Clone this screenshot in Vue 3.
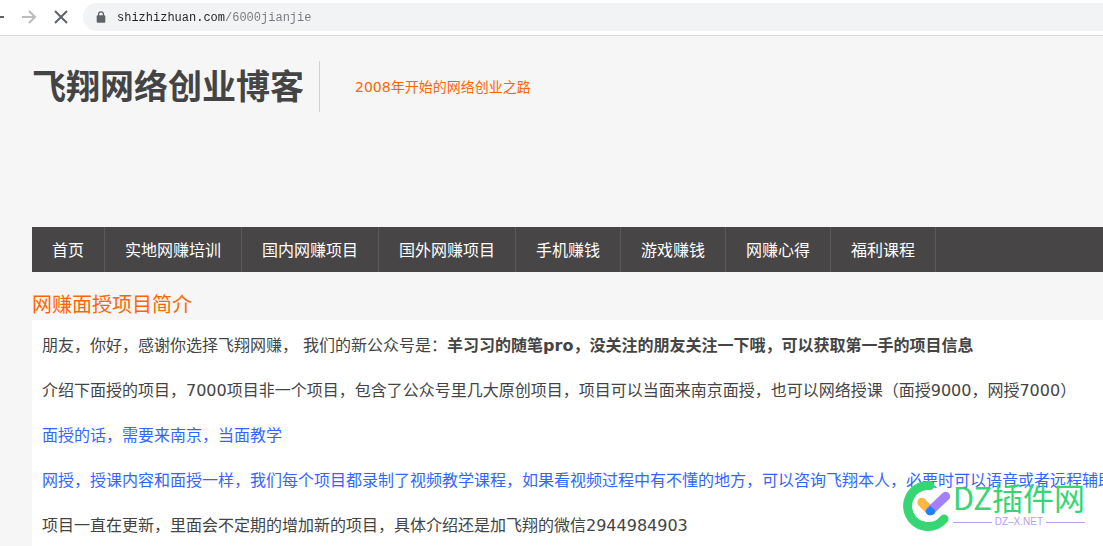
<script setup>
const navItems = ['首页', '实地网赚培训', '国内网赚项目', '国外网赚项目', '手机赚钱', '游戏赚钱', '网赚心得', '福利课程']
const url = 'shizhizhuan.com/6000jianjie'
</script>

<template>
  <div class="window">
    <div class="toolbar">
      <button class="tool back" type="button" aria-label="后退">
        <svg width="16" height="16" viewBox="0 0 16 16"><path d="M15 8H2M8 2L2 8l6 6" /></svg>
      </button>
      <button class="tool forward" type="button" aria-label="前进">
        <svg width="16" height="16" viewBox="0 0 16 16"><path d="M1 8h13M8 2l6 6-6 6" /></svg>
      </button>
      <button class="tool stop" type="button" aria-label="停止">
        <svg width="16" height="16" viewBox="0 0 16 16"><path d="M2 2l12 12M14 2L2 14" /></svg>
      </button>
      <label class="address">
        <svg class="lock" width="10" height="12" viewBox="0 0 10 12">
          <path d="M2.6 5V3.3a2.4 2.4 0 0 1 4.8 0V5" fill="none" stroke="#5f6368" stroke-width="1.3" />
          <rect x="0.7" y="4.2" width="8.6" height="7.6" rx="1" fill="#5f6368" />
        </svg>
        <input class="url" type="text" aria-label="地址" :value="url" spellcheck="false" />
      </label>
    </div>

    <div class="site">
      <header class="masthead">
        <h1 class="title">飞翔网络创业博客</h1>
        <p class="tagline">2008年开始的网络创业之路</p>
      </header>

      <nav class="nav">
        <a v-for="item in navItems" :key="item" href="#">{{ item }}</a>
      </nav>

      <main class="content">
        <h2 class="heading">网赚面授项目简介</h2>
        <article class="article">
          <p>朋友，你好，感谢你选择飞翔网赚， 我们的新公众号是：<strong>羊习习的随笔pro，没关注的朋友关注一下哦，可以获取第一手的项目信息</strong></p>
          <p>介绍下面授的项目，7000项目非一个项目，包含了公众号里几大原创项目，项目可以当面来南京面授，也可以网络授课（面授9000，网授7000）</p>
          <p class="blue">面授的话，需要来南京，当面教学</p>
          <p class="blue">网授，授课内容和面授一样，我们每个项目都录制了视频教学课程，如果看视频过程中有不懂的地方，可以咨询飞翔本人，必要时可以语音或者远程辅助</p>
          <p>项目一直在更新，里面会不定期的增加新的项目，具体介绍还是加飞翔的微信2944984903</p>
        </article>
      </main>
    </div>

    <div class="watermark">
      <svg width="52" height="56" viewBox="0 0 52 56" fill="none" stroke-linecap="round">
        <path d="M30 7.6A20.5 20.5 0 1 0 44 41" stroke="#35d673" stroke-width="9" />
        <path d="M21.7 24.3L30.3 32.7" stroke="#ffb83f" stroke-width="9" />
        <path d="M30.3 32.7L45.7 18.3" stroke="#a380ff" stroke-width="9" />
        <path d="M30.3 28L35 32.2C36 36 33 37.3 30.3 37.3S25 35.5 26 32.2Z" fill="#1684fc" />
      </svg>
      <div class="mark-text">
        <span class="mark-name">DZ插件网</span>
        <span class="mark-url">DZ–X.NET</span>
      </div>
    </div>
  </div>
</template>

<style>
body {
  margin: 0;
  background: #f6f6f6;
}
</style>

<style scoped>
.window {
  position: relative;
  display: flex;
  flex-direction: column;
  min-height: 100vh;
  overflow: hidden;
  background: #f6f6f6;
  color: #444;
  font-family: "DejaVu Sans", "Noto Sans CJK SC", sans-serif;
  font-size: 16px;
}

.toolbar {
  display: flex;
  flex: none;
  align-items: center;
  height: 35px;
  background: #fff;
  border-bottom: 1px solid #d9dadc;
}

.tool {
  display: flex;
  flex: none;
  padding: 0 0 1px;
  border: 0;
  background: none;
  color: #5f6368;
}

.tool path {
  fill: none;
  stroke: currentColor;
  stroke-width: 2;
}

.back {
  margin-left: -11px;
}

.forward {
  margin-left: 16px;
  color: #bbbcbe;
}

.stop {
  margin-left: 16px;
}

.address {
  display: flex;
  flex: 1;
  align-items: center;
  gap: 11px;
  height: 28px;
  margin: 0 -16px 1px 14px;
  padding-left: 13px;
  border-radius: 14px;
  background: #f1f3f4;
}

.lock {
  flex: none;
}

.url {
  flex: 1;
  min-width: 0;
  padding: 2px 0 0;
  border: 0;
  outline: 0;
  background: linear-gradient(90deg, #202124 15ch, #74777b 15ch);
  background-clip: text;
  color: transparent;
  font: 12px/20px "Liberation Mono", monospace;
}

.site {
  display: flex;
  flex: 1;
  flex-direction: column;
  padding: 25px 0 0 32px;
  white-space: nowrap;
}

.masthead {
  display: flex;
  align-items: flex-start;
  height: 166px;
}

.title {
  margin: 0;
  padding: 2px 15px 0 0;
  border-right: 1px solid #d2d2d2;
  font-size: 34px;
  line-height: 49px;
}

.tagline {
  margin: 0 0 0 35px;
  padding-top: 2px;
  color: #ff6600;
  font-size: 14px;
  line-height: 49px;
}

.nav {
  display: flex;
  background: #484546;
}

.nav a {
  padding: 2px 20px 0;
  border-right: 1px solid #5c595a;
  color: #fff;
  line-height: 43px;
  text-decoration: none;
}

.content {
  display: flex;
  flex: 1;
  flex-direction: column;
}

.heading {
  margin: 18px 0 0;
  color: #ff6600;
  font-size: 20px;
  font-weight: 400;
  line-height: 30px;
}

.article {
  display: flex;
  flex: 1;
  flex-direction: column;
  gap: 15px;
  padding: 11px 10px 0;
  background: #fff;
}

.article p {
  margin: 0;
  line-height: 30px;
}

.article .blue {
  color: #3366ff;
}

.watermark {
  position: absolute;
  right: 18px;
  bottom: 12px;
  display: flex;
  gap: 1px;
}

.mark-text {
  display: flex;
  flex-direction: column;
  font-family: "Noto Sans CJK SC", sans-serif;
}

.mark-name {
  color: #35d673;
  font-size: 31px;
  line-height: 38px;
  white-space: nowrap;
}

.mark-url {
  display: flex;
  align-items: center;
  gap: 3px;
  color: #b79cf5;
  font: 10px/12px "Liberation Sans", sans-serif;
}

.mark-url::before,
.mark-url::after {
  content: "";
  flex: 1;
  height: 1px;
  background: #b79cf5;
}
</style>
